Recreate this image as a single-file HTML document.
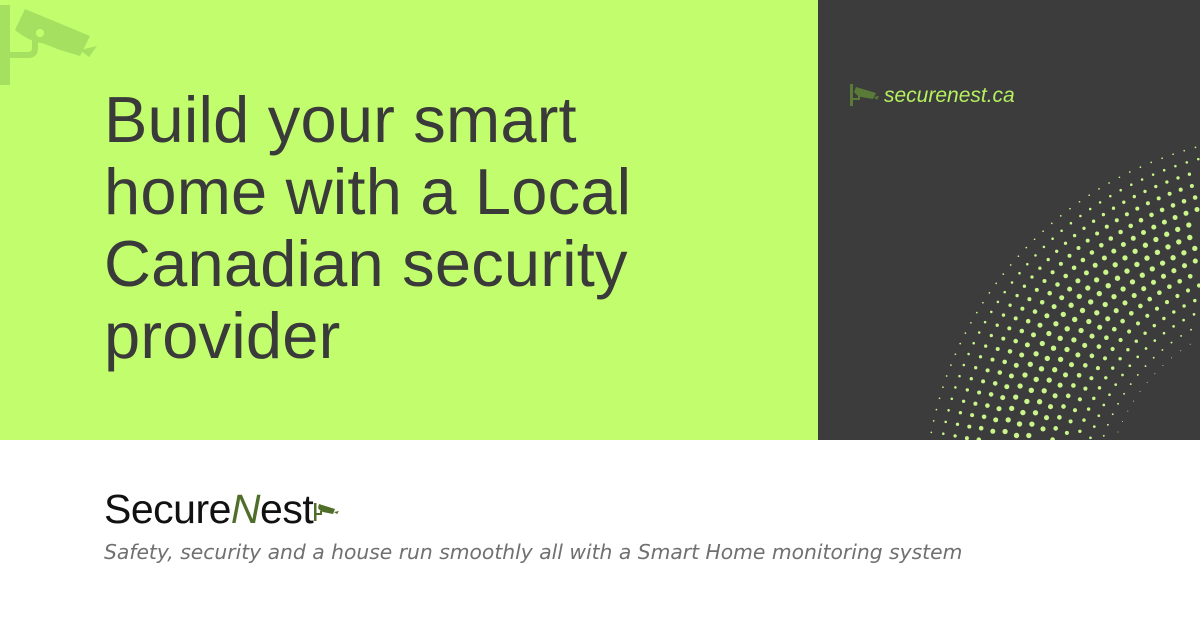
<!DOCTYPE html>
<html><head><meta charset="utf-8"><style>
*{margin:0;padding:0}
body{width:1200px;height:630px;overflow:hidden;background:#fff;font-family:"Liberation Sans",sans-serif;position:relative}
#g{position:absolute;left:0;top:0;width:818px;height:440px;background:#c2fd6e}
#d{position:absolute;left:818px;top:0;width:382px;height:440px;background:#3c3c3c;overflow:hidden}
h1{position:absolute;left:104px;top:84px;font-weight:normal;font-size:65px;line-height:72px;color:#3a3a3a;letter-spacing:0.2px}
#url{position:absolute;left:884px;top:84px;font-size:21px;font-style:italic;color:#b5f060}
#logo{position:absolute;left:104px;top:486px;font-size:41px;color:#111;letter-spacing:-0.5px}
#logo i{color:#4e6e2a;font-style:italic}
#tag{position:absolute;left:104px;top:540px;font-family:"DejaVu Sans",sans-serif;font-size:20.3px;font-style:italic;color:#707070}
</style></head><body>
<div id="g"></div>
<div id="d"><svg id="dots" width="382" height="440"></svg></div>
<svg style="position:absolute;left:0;top:0" width="110" height="90">
<g fill="#a6e061">
<rect x="0" y="5" width="10" height="80"/>
<path d="M10 58 H28 Q38 58 38 48 V40 H32 V48 Q32 52 28 52 H10Z"/>
<path d="M25 9 L90 36 L80 56 L60 50 L42 43 Q30 42 15 30Z"/>
<path d="M80 50 L97 46 L89 57Z"/>
</g><circle cx="40" cy="33" r="4" fill="#c2fd6e"/></svg>
<svg style="position:absolute;left:848px;top:84px" width="32" height="24">
<g fill="#5a7a38"><rect x="2" y="0" width="3" height="22"/><path d="M5 16 H12 V12 H10 V14 H5Z"/><path d="M8 3 L28 9 L25 15 L13 13 Q9 12 6 8Z"/><path d="M26 13 L31 12 L29 16Z"/></g></svg>
<div id="url">securenest.ca</div>
<h1>Build your smart<br>home with a Local<br>Canadian security<br>provider</h1>
<div id="logo">Secure<i>N</i>est<svg width="30" height="22" style="vertical-align:0"><g fill="#4e6e2a"><rect x="1" y="2" width="2.5" height="18"/><path d="M3 14 H9 V10 H7 V12 H3Z"/><path d="M6 3 L22 8 L20 13 L10 11 Q7 10 5 7Z"/><path d="M21 11 L26 10 L24 13Z"/></g></svg></div>
<div id="tag">Safety, security and a house run smoothly all with a Smart Home monitoring system</div>
<script>
var s=document.getElementById('dots'),h='';
var cx=1290-818,cy=500;
for(var r=185;r<=375;r+=12){
 var n=Math.round(r*1.2/12);
 for(var k=0;k<=n;k++){
  var a=(188+k*(68/n)+((r/12)%2)*2)*Math.PI/180;
  var x=cx+r*Math.cos(a),y=cy+r*Math.sin(a);
  if(x<0||y>440||x>382)continue;
  var t=(r-185)/190;var m=Math.sin(Math.PI*Math.min(1,Math.max(0,t)));
  var rad=0.5+2.2*m;
  h+='<circle cx="'+x.toFixed(1)+'" cy="'+y.toFixed(1)+'" r="'+rad.toFixed(2)+'" fill="#c9f58a"/>';
 }
}
s.innerHTML=h;
</script>
</body></html>
